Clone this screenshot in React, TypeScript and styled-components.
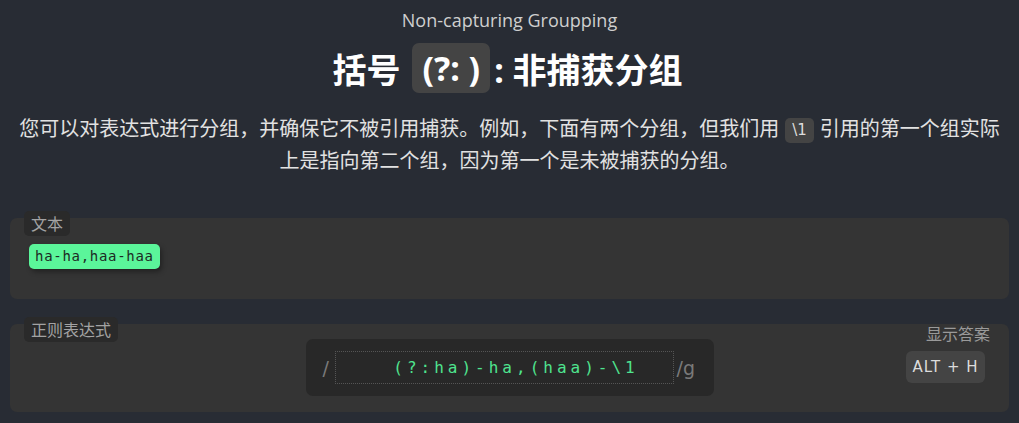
import React from "react";
import styled, { createGlobalStyle } from "styled-components";

const Global = createGlobalStyle`
  html, body { margin: 0; padding: 0; background: #282c34; }
  body {
    font-family: "Open Sans", "Noto Sans CJK SC", sans-serif;
    color: #e6e6e6;
  }
`;

const Page = styled.div`
  padding: 8px 10px 0;
  box-sizing: border-box;
  width: 1019px;
  height: 423px;
  overflow: hidden;
`;

const Subtitle = styled.div`
  text-align: center;
  font-size: 18px;
  line-height: 24px;
  color: #cfcfcf;
`;

const Heading = styled.h1`
  margin: 11px 0 0;
  height: 50px;
  display: flex;
  align-items: center;
  justify-content: center;
  font-size: 34px;
  font-weight: 700;
  color: #ffffff;
  font-family: "Noto Sans", "Noto Sans CJK SC", sans-serif;
  transform: translateX(-2px);
`;

const HeadCode = styled.span`
  display: inline-flex;
  align-items: center;
  height: 50px;
  padding: 0 10px;
  margin: 0 4px 0 12px;
  background: #444444;
  border-radius: 7px;
  white-space: pre;
`;

const Para = styled.p`
  margin: 19px 8px 0;
  text-align: center;
  font-size: 20px;
  line-height: 32px;
  color: #e2e2e2;
  font-family: "Noto Sans CJK SC", sans-serif;
`;

const InlineCode = styled.code`
  display: inline-block;
  background: #444444;
  color: #dddddd;
  border-radius: 5px;
  padding: 0 7px;
  margin: 0 6px;
  font-family: "DejaVu Sans", sans-serif;
  font-size: 15px;
  line-height: 25px;
  vertical-align: 1px;
`;

const Panel = styled.section<{ $top: number; $h: number }>`
  position: relative;
  margin-top: ${(p) => p.$top}px;
  height: ${(p) => p.$h}px;
  box-sizing: border-box;
  background: #343434;
  border-radius: 7px;
`;

const PanelLabel = styled.span`
  position: absolute;
  left: 14px;
  top: -7px;
  height: 25px;
  line-height: 25px;
  padding: 0 7px;
  background: #2a2a2a;
  color: #a3a3a3;
  font-size: 16px;
  border-radius: 5px;
  font-family: "Noto Sans CJK SC", sans-serif;
`;

const TextBody = styled.div`
  padding: 26px 19px 0;
  display: flex;
`;

const Match = styled.span`
  display: inline-block;
  height: 25px;
  line-height: 25px;
  padding: 0 6px;
  background: #5bf59a;
  color: #1d2a24;
  border-radius: 5px;
  font-family: "DejaVu Sans Mono", monospace;
  font-size: 14px;
  letter-spacing: 0.7px;
  box-shadow: 2px 3px 5px rgba(0, 0, 0, 0.35);
`;

const RegexBody = styled.div`
  display: grid;
  grid-template-columns: 1fr auto 1fr;
  align-items: start;
  height: 100%;
  padding: 15px 0 0;
  box-sizing: border-box;
`;

const RegexBox = styled.div`
  grid-column: 2;
  width: 408px;
  height: 57px;
  box-sizing: border-box;
  background: #282828;
  border-radius: 7px;
  display: flex;
  align-items: center;
  padding: 0 0 0 17px;
  gap: 3px;
  color: #7a7a7a;
  font-size: 19px;
  font-family: "DejaVu Sans", sans-serif;
`;

const Slash = styled.span`
  width: 9px;
`;

const RegexInput = styled.div`
  width: 339px;
  height: 33px;
  box-sizing: border-box;
  border: 1px dotted #555555;
  display: flex;
  align-items: center;
  justify-content: center;
  padding-left: 24px;
  color: #4fe48f;
  font-family: "DejaVu Sans Mono", monospace;
  font-size: 16px;
  letter-spacing: 4px;
`;

const Answer = styled.div`
  grid-column: 3;
  justify-self: end;
  display: flex;
  flex-direction: column;
  align-items: flex-end;
  margin-top: -16px;
  padding-right: 19px;
`;

const AnswerLabel = styled.span`
  color: #9a9a9a;
  font-size: 16px;
  line-height: 20px;
  font-family: "Noto Sans CJK SC", sans-serif;
`;

const KeyButton = styled.button`
  margin-top: 8px;
  margin-right: 5px;
  height: 32px;
  width: 79px;
  border: none;
  border-radius: 6px;
  background: #444444;
  color: #dcdcdc;
  font-family: "DejaVu Sans", sans-serif;
  font-size: 15px;
  letter-spacing: 1px;
`;

export default function App() {
  return (
    <Page>
      <Global />
      <Subtitle>Non-capturing Groupping</Subtitle>
      <Heading>
        括号<HeadCode>(?: )</HeadCode>: 非捕获分组
      </Heading>
      <Para>
        您可以对表达式进行分组，并确保它不被引用捕获。例如，下面有两个分组，但我们用
        <InlineCode>\1</InlineCode>
        引用的第一个组实际上是指向第二个组，因为第一个是未被捕获的分组。
      </Para>
      <Panel $top={42} $h={81}>
        <PanelLabel>文本</PanelLabel>
        <TextBody>
          <Match>ha-ha,haa-haa</Match>
        </TextBody>
      </Panel>
      <Panel $top={25} $h={88}>
        <PanelLabel>正则表达式</PanelLabel>
        <RegexBody>
          <RegexBox>
            <Slash>/</Slash>
            <RegexInput>(?:ha)-ha,(haa)-\1</RegexInput>
            <span>/g</span>
          </RegexBox>
          <Answer>
            <AnswerLabel>显示答案</AnswerLabel>
            <KeyButton>ALT + H</KeyButton>
          </Answer>
        </RegexBody>
      </Panel>
    </Page>
  );
}
